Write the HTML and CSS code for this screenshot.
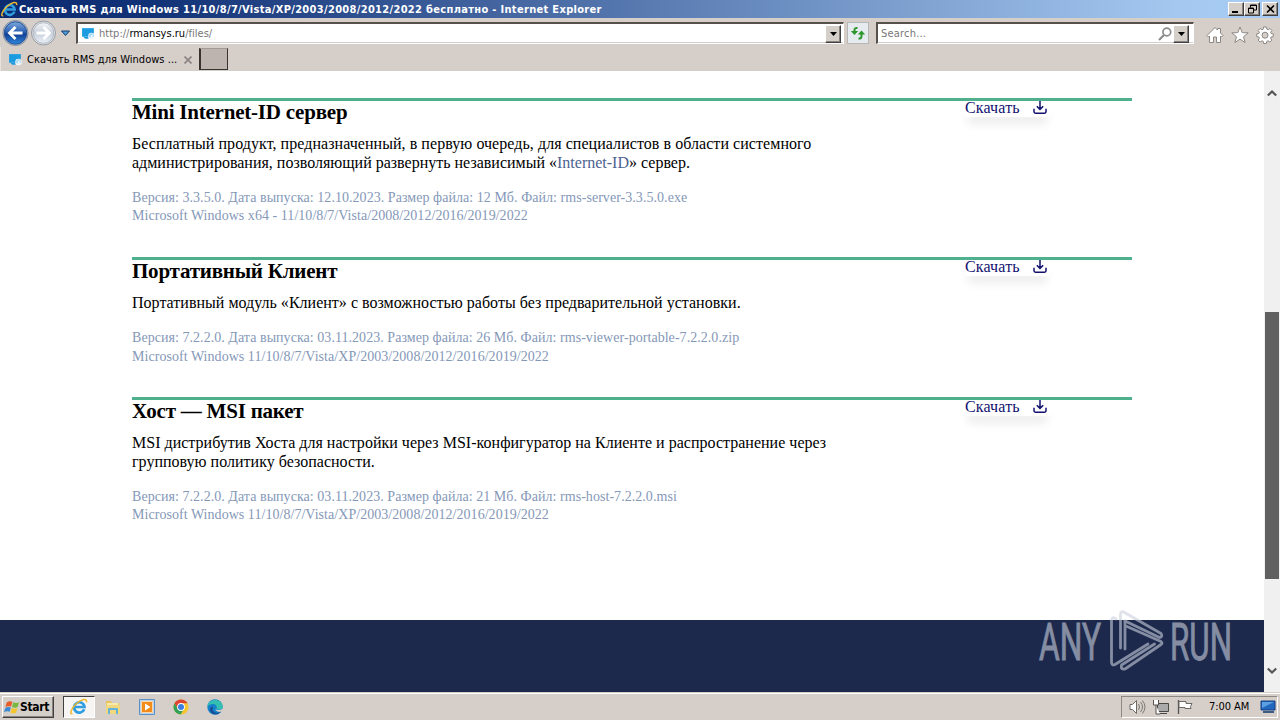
FILE: index.html
```html
<!DOCTYPE html>
<html lang="ru">
<head>
<meta charset="utf-8">
<title>Скачать RMS для Windows</title>
<link rel="stylesheet" href="styles.css">
</head>
<body>
<svg width="0" height="0" class="defs">
  <defs>
    <linearGradient id="blue" x1="0" y1="0" x2="0" y2="1"><stop offset="0" stop-color="#7ea9dc"/><stop offset=".45" stop-color="#2b62b4"/><stop offset=".55" stop-color="#123f93"/><stop offset="1" stop-color="#2f8ade"/></linearGradient>
    <linearGradient id="silver" x1="0" y1="0" x2="0" y2="1"><stop offset="0" stop-color="#f4f6f9"/><stop offset=".5" stop-color="#c7cfda"/><stop offset="1" stop-color="#eaf0f7"/></linearGradient>
    <symbol id="ie" viewBox="0 0 18 18">
      <path d="M14.2 11.3A5.2 5.2 0 1 1 14.5 9H5" fill="none" stroke="#2f9de0" stroke-width="2.7"/>
      <path d="M2.4 15.5C-.6 17 .6 11 6 6S17.5-.2 16.5 4.3" fill="none" stroke="#efb72c" stroke-width="1.5"/>
    </symbol>
    <symbol id="site" viewBox="0 0 14 14">
      <path d="M1 2h11v8H1z" fill="#1b9be0"/><path d="M2 10h5v2H4z" fill="#1b9be0"/>
      <circle cx="9.8" cy="9.3" r="3" fill="#fff"/><circle cx="9.8" cy="9" r="2.2" fill="#8fcdf0"/><path d="M9 8h2v4H9z" fill="#e8f6fd"/>
    </symbol>
    <symbol id="download" viewBox="0 0 14 14">
      <path d="M7 0v8M3.8 5.2 7 8.4l3.2-3.2M1 7.8v3q0 1.4 1.4 1.4h9.2q1.4 0 1.4-1.4v-3" fill="none" stroke="#12126e" stroke-width="1.5"/>
    </symbol>
    <symbol id="down" viewBox="0 0 7 4"><path d="M0 0h7L3.5 4z"/></symbol>
  </defs>
</svg>

<header class="titlebar">
  <svg class="title-ie"><use href="#ie"/></svg>
  <span class="title-text">Скачать RMS для Windows 11/10/8/7/Vista/XP/2003/2008/2012/2022 бесплатно - Internet Explorer</span>
  <div class="window-buttons">
    <span class="bevel winbtn"><svg viewBox="0 0 13 10"><path d="M2 7h6v2H2z"/></svg></span>
    <span class="bevel winbtn"><svg viewBox="0 0 13 10"><path d="M4.5 3.5V1h6v5H8M4.5 1.5h6" fill="none" stroke="#000"/><path d="M2.5 4v5h5V4zM2 4.5h6" fill="none" stroke="#000"/></svg></span>
    <span class="bevel winbtn close"><svg viewBox="0 0 13 10"><path d="m3 1.5 7 7m0-7-7 7" stroke="#000" stroke-width="1.6"/></svg></span>
  </div>
</header>

<nav class="navbar">
  <svg class="history" viewBox="0 0 74 28">
    <circle cx="15.5" cy="14" r="12.6" fill="#b8bfc9" stroke="#737b86" stroke-width=".7"/><circle cx="15.5" cy="14" r="11.2" fill="url(#blue)" stroke="#23519c"/>
    <path d="M22.5 14H10m5.5-6-6 6 6 6" fill="none" stroke="#fff" stroke-width="2.8"/>
    <circle cx="43.5" cy="14" r="12" fill="#dde1e6" stroke="#858b94" stroke-width=".8"/><circle cx="43.5" cy="14" r="10.3" fill="url(#silver)" stroke="#b2bac5"/>
    <path d="M36.5 14H49m-5.5-6 6 6-6 6" fill="none" stroke="#fff" stroke-width="2.8"/>
    <path d="M61.5 12h8l-4 4.5z" fill="#4e9bd8" stroke="#173d6b"/>
  </svg>
  <div class="field address">
    <svg class="site-icon"><use href="#site"/></svg>
    <span class="url">http://<b>rmansys.ru</b>/files/</span>
    <span class="bevel drop"><svg><use href="#down"/></svg></span>
  </div>
  <span class="refresh"><svg viewBox="0 0 16 16"><path d="M7.500 3Q4.500 2.500 4.500 5v2M8.500 13.500q3 .5 3-2.500V9" fill="none" stroke="#2b962b" stroke-width="2"/><path d="M.8 6h7.400L4.500 10zM7.800 9.500h7.400L11.500 5.500z" fill="#2b962b"/></svg></span>
  <div class="field search">
    <span class="placeholder">Search...</span>
    <svg class="glass" viewBox="0 0 14 14"><circle cx="8.8" cy="5" r="3.9" fill="none" stroke="#8b8b8b" stroke-width="1.7"/><path d="m6 8-5 5" stroke="#8b8b8b" stroke-width="2.2"/></svg>
    <span class="bevel drop"><svg><use href="#down"/></svg></span>
  </div>
  <div class="tools">
    <svg viewBox="0 0 18 18"><path d="M1 9.5 9 1.5l2.5 2.5V2.5h3V7L17 9.5 15.5 11l-1-1v6.5h-4V11h-3v5.500h-4V10l-1 1z" fill="#fff" stroke="#8d8884"/></svg>
    <svg viewBox="0 0 18 18"><path d="m9 1 2.2 5.600 6 .3-4.700 3.800 1.600 5.800L9 13.200l-5.100 3.300 1.600-5.800L.8 6.900l6-.3z" fill="#fff" stroke="#8d8884"/></svg>
    <svg viewBox="0 0 18 18"><path d="m7.500 1h3l.4 2.200 1.300.6L14 2.500 15.900 4.500l-1.300 1.800.5 1.200 2.200.4v2.700l-2.200.4-.5 1.300 1.300 1.800-2 2-1.800-1.300-1.300.5-.4 2.200H7.600l-.4-2.200-1.300-.5-1.800 1.300-2-2 1.300-1.800-.5-1.300-2.200-.4V7.900l2.200-.4.5-1.200L2.100 4.500l2-2 1.800 1.300 1.300-.6z" fill="#fff" stroke="#8d8884"/><circle cx="9" cy="9.200" r="3" fill="#d5cec9" stroke="#8d8884"/></svg>
  </div>
</nav>

<div class="tabs">
  <div class="tab">
    <svg class="site-icon"><use href="#site"/></svg>
    <span class="tab-text">Скачать RMS для Windows ...</span>
    <svg class="tab-close" viewBox="0 0 8 8"><path d="m.5.500 7 7m0-7-7 7" stroke="#8b8683" stroke-width="1.700"/></svg>
  </div>
  <span class="new-tab"></span>
</div>

<div class="viewport">
  <div class="page">
    <main class="products">
      <article class="product">
        <div class="info">
          <h2 class="name">Mini Internet-ID сервер</h2>
          <p class="about"><span class="wide">Бесплатный продукт, предназначенный, в первую очередь, для специалистов в области системного</span><br><span class="normal">администрирования, позволяющий развернуть независимый «<a class="link">Internet-ID</a>» сервер.</span></p>
          <p class="meta">Версия: 3.3.5.0. Дата выпуска: 12.10.2023. Размер файла: 12 Мб. Файл: rms-server-3.3.5.0.exe<br>Microsoft Windows x64 - 11/10/8/7/Vista/2008/2012/2016/2019/2022</p>
        </div>
        <a class="get">Скачать<svg><use href="#download"/></svg></a>
      </article>
      <article class="product">
        <div class="info">
          <h2 class="name">Портативный Клиент</h2>
          <p class="about">Портативный модуль «Клиент» с возможностью работы без предварительной установки.</p>
          <p class="meta">Версия: 7.2.2.0. Дата выпуска: 03.11.2023. Размер файла: 26 Мб. Файл: rms-viewer-portable-7.2.2.0.zip<br>Microsoft Windows 11/10/8/7/Vista/XP/2003/2008/2012/2016/2019/2022</p>
        </div>
        <a class="get">Скачать<svg><use href="#download"/></svg></a>
      </article>
      <article class="product">
        <div class="info">
          <h2 class="name">Хост — MSI пакет</h2>
          <p class="about">MSI дистрибутив Хоста для настройки через MSI-конфигуратор на Клиенте и распространение через<br>групповую политику безопасности.</p>
          <p class="meta">Версия: 7.2.2.0. Дата выпуска: 03.11.2023. Размер файла: 21 Мб. Файл: rms-host-7.2.2.0.msi<br>Microsoft Windows 11/10/8/7/Vista/XP/2003/2008/2012/2016/2019/2022</p>
        </div>
        <a class="get">Скачать<svg><use href="#download"/></svg></a>
      </article>
    </main>
    <footer class="footer"></footer>
  </div>
  <div class="scrollbar">
    <svg class="arrow" viewBox="0 0 10 8"><path d="m.8 6.500 4.200-4 4.200 4" fill="none" stroke="#555" stroke-width="2.200"/></svg>
    <span class="thumb"></span>
    <svg class="arrow" viewBox="0 0 10 8"><path d="m.8 1.500 4.200 4 4.200-4" fill="none" stroke="#555" stroke-width="2.200"/></svg>
  </div>
</div>

<svg class="watermark" viewBox="0 0 200 68">
  <g class="mark-text"><text x="0" y="51.500" textLength="62" lengthAdjust="spacingAndGlyphs">ANY</text><text x="131" y="51.500" textLength="62" lengthAdjust="spacingAndGlyphs">RUN</text></g>
  <g class="mark-lines">
    <path d="M77 11q-4-3-4.500 1v42q0 4 3.500 2.500l33-20.500"/>
    <path d="M81.500 40V7q0-5 4-2.500L122 25.500q2 3.500-1.500 4L86 13"/>
    <path d="M86 13v28M88 18.500 122 33.500q2 1.500 0 3L86 61q-4.500 1-3.500-4l33-21"/>
  </g>
</svg>

<footer class="taskbar">
  <span class="bevel start"><svg viewBox="0 0 17 16"><path d="M3 3q3-2 6-.5L7.500 7.500q-3-1-6 .5z" fill="#e85c29"/><path d="M10 3q3 1.500 6 0l-1.500 5q-3 1.500-6 0z" fill="#77b83e"/><path d="M1.300 9q3-1.500 6-.5L6 13q-3-1-6 .5z" fill="#3a8bd4"/><path d="M8.300 9q3 1.500 6 0l-1.500 5q-3 1.500-6 0z" fill="#f5c52e"/></svg><b>Start</b></span>
  <span class="task active"><svg viewBox="0 0 18 18"><use href="#ie"/></svg></span>
  <div class="launch">
    <svg viewBox="0 0 18 18"><path d="M2 3h5l1 2h7v10H2z" fill="#e9c45c"/><path d="M3 5h11v4H3z" fill="#f8eba8"/><path d="M2 7h14v9H2z" fill="#f1d77d"/><path d="M4 16v-5q0-1 1-1h8q1 0 1 1v5h-2v-4H6v4z" fill="#63b3dc"/></svg>
    <svg viewBox="0 0 18 18"><path d="M1.500 1.500h15v15h-15z" fill="#b9d3ec" stroke="#5990c8"/><path d="M3 3h12v12H3z" fill="#f28a1c"/><path d="M3.500 3.500h11v11h-11z" fill="none" stroke="#f9d9ab"/><path d="m7 5.500 5.500 3.500L7 12.500z" fill="#fff"/></svg>
    <svg viewBox="0 0 18 18"><circle cx="9" cy="9" r="7.500" fill="#f7c52d"/><path d="M2.500 5.250A7.500 7.500 0 0 1 15.500 5.250H9L5.800 10.900z" fill="#dd4434"/><path d="M2.500 5.250 5.800 10.900 12 10.900 8.500 16.500A7.500 7.500 0 0 1 2.500 5.250" fill="#33a057"/><circle cx="9" cy="9" r="3.900" fill="#fff"/><circle cx="9" cy="9" r="3" fill="#3b7de0"/></svg>
    <svg viewBox="0 0 18 18"><circle cx="9" cy="9" r="7.700" fill="#1682ca"/><path d="M1.500 8C3 0 16 0 16.700 8.500c0 3.500-5 4-6 2 1-4-4-6.500-9-2.500z" fill="#35bfb0"/><path d="M7 9c-2 5 4 7 8 5-5 5-12 1-11-3 .4-2 2-3 3-2z" fill="#174f97"/><path d="M10 11c1 2 5 1 6.500-.5l.5 2q-4 3-7.500-.5z" fill="#d5cec9"/></svg>
  </div>
  <div class="tray">
    <svg viewBox="0 0 18 16"><path d="M2 5.500h2.500l4-4v13l-4-4H2z" fill="#fff" stroke="#6d6964"/><path d="M10.500 5q2 3 0 6M12.500 3q4 5 0 10M14.500 1.500q5 6.500 0 13" fill="none" stroke="#7d7975"/></svg>
    <svg viewBox="0 0 18 16"><path d="M5.500 4.500h11v8h-11zM8 14.500h7" fill="#aaa" stroke="#4b4946"/><path d="M1.500 1v5h5V1M4 6v9h4" fill="#fff" stroke="#55524f"/></svg>
    <svg viewBox="0 0 18 16"><path d="M2.500 1v14" stroke="#55524f" stroke-width="1.300"/><path d="M3 2.500h7v2h6l-1.500 3 .5 2H9v-1H3z" fill="#fff" stroke="#6b6864"/></svg>
    <span class="clock">7:00 AM</span>
    <svg viewBox="0 0 18 16"><path d="M2 2h14v9H2z" fill="#2167bd" stroke="#173f80"/><path d="M3 3h12L3 9z" fill="#5c9fe2"/><path d="M4 13h11" stroke="#3d5b83" stroke-width="2"/></svg>
  </div>
</footer>
</body>
</html>
```
FILE: styles.css
```css
* { box-sizing: border-box; }
body {
  margin: 0; width: 1280px; height: 720px; overflow: hidden;
  display: flex; flex-direction: column; position: relative;
  background: #d5cec9; color: #000;
  font-family: "DejaVu Sans Condensed", "DejaVu Sans", sans-serif; font-size: 11px;
}
svg { display: block; flex: none; }
.defs { position: absolute; }
.bevel {
  background: #d5cfc9; border: 1px solid; border-color: #fff #404040 #404040 #fff;
  box-shadow: inset -1px -1px #88837e; display: flex; align-items: center; justify-content: center; flex: none;
}

.titlebar {
  height: 18px; flex: none; display: flex; align-items: center; padding: 0 2px 0 1px;
  background: linear-gradient(90deg, #0c2a70, #123277 12%, #a4c8f0 92%, #a8cdf4);
}
.title-ie { width: 17px; height: 17px; }
.title-text { flex: 1; margin-left: 1px; color: #fff; font-weight: bold; white-space: nowrap; letter-spacing: .32px; line-height: 17px; }
.window-buttons { display: flex; }
.winbtn { width: 16px; height: 14px; }
.winbtn svg { width: 13px; height: 10px; }
.close { margin-left: 2px; }

.navbar { height: 29px; flex: none; display: flex; align-items: flex-start; padding-top: 1px; }
.history { width: 74px; height: 28px; }
.field {
  height: 22px; margin-top: 3px; display: flex; align-items: center; background: #fff;
  border: 1px solid; border-color: #57504b #fff #fff #57504b; border-top-width: 2px; border-left-width: 2px;
  box-shadow: inset 0 -1px #d5cec9;
}
.address { width: 768px; margin-left: 2px; padding-left: 3px; }
.address .drop { margin-right: 2px; }
.site-icon { width: 15px; height: 15px; }
.url { flex: 1; margin-left: 3px; color: #777; letter-spacing: .02px; }
.url b { font-weight: normal; color: #000; }
.drop { width: 16px; height: 18px; margin-right: 1px; }
.drop svg { width: 7px; height: 4px; }
.refresh { width: 22px; height: 22px; margin: 3px 7px 0 3px; border: 1px solid #b9b7b6; background: #e6ebef; padding: 2px; }
.refresh svg { width: 16px; height: 16px; }
.search { width: 318px; padding-left: 3px; }
.search .drop { margin-right: 4px; }
.placeholder { flex: 1; color: #777; letter-spacing: .2px; }
.glass { width: 14px; height: 14px; margin-right: 1px; }
.tools { display: flex; gap: 7px; margin: 7px 0 0 12px; }
.tools svg { width: 18px; height: 18px; }

.tabs { height: 24px; flex: none; display: flex; align-items: flex-start; border-bottom: 1px solid #d3d0ca; }
.tab { width: 199px; height: 24px; display: flex; align-items: center; padding: 1px 0 0 7px; border-left: 1px solid #e7e2dd; }
.tab-text { width: 153px; margin-left: 4px; white-space: nowrap; letter-spacing: .03px; }
.tab-close { width: 8px; height: 8px; margin-left: 4px; }
.new-tab { width: 29px; height: 22px; margin-top: 1px; background: #bdb4af; border: 1px solid #38332f; border-top-color: #a19a95; border-width: 1px 1px 1px 2px; }

.viewport { height: 621px; flex: none; display: flex; background: #fff; }
.page { width: 1264px; display: flex; flex-direction: column; justify-content: space-between; }
.products { width: 1000px; margin: 27px 0 0 132px; font-family: "Liberation Serif", serif; }
.product { display: flex; border-top: 3px solid #4eb08c; height: 159px; }
.product + .product { height: 140px; }
.info { width: 833px; flex: none; white-space: nowrap; }
.name { margin: 0; font-size: 21px; line-height: 22px; height: 24px; letter-spacing: -.22px; }
.about { margin: 10px 0 0; font-size: 16px; line-height: 18.5px; letter-spacing: .015px; }
.wide { letter-spacing: .055px; }
.normal { letter-spacing: 0; }
.meta { margin: 16.8px 0 0; font-size: 14px; line-height: 18.5px; color: #8598b8; letter-spacing: .045px; }
.link { color: #4c6390; }
.get {
  width: 85px; height: 16px; display: flex; justify-content: space-between; align-items: center;
  padding: 0 3px 3px 0; color: #12126e; font-size: 16px; letter-spacing: .15px; line-height: 13px; box-shadow: 0 10px 10px -3px #00000014;
}
.get svg { width: 14px; height: 14px; }
.footer { height: 72px; background: #1c294d; }
.scrollbar { width: 16px; background: #f0f0f0; display: flex; flex-direction: column; align-items: center; padding-top: 18px; }
.arrow { width: 10px; height: 8px; }
.thumb { width: 14px; height: 267px; margin: 215px 0 88px; background: #606060; flex: none; }

.watermark { position: absolute; left: 1039px; top: 608px; width: 200px; height: 68px; overflow: visible; opacity: .6; }
.mark-text { fill: #cbd0dd; stroke: #cbd0dd; stroke-width: .9px; font: 51px "Roboto", sans-serif; }
.mark-lines { fill: none; stroke: #cbd0dd; stroke-width: 2.8px; stroke-linecap: round; stroke-linejoin: round; }

.taskbar { height: 28px; flex: none; display: flex; align-items: center; padding: 1px 2px; border-top: 1px solid #d5cec9; box-shadow: inset 0 1px #fff; }
.start { width: 52px; height: 22px; justify-content: flex-start; padding-left: 1px; letter-spacing: -.3px; font-size: 12px; }
.start svg { width: 16px; height: 16px; }
.task { width: 32px; height: 22px; margin-left: 9px; border: 1px solid; border-color: #404040 #fff #fff #404040; background: #f7f5f3; display: flex; align-items: center; justify-content: center; }
.task svg { width: 18px; height: 18px; }
.launch { display: flex; gap: 16px; margin-left: 9px; flex: 1; }
.launch svg { width: 18px; height: 18px; }
.tray { width: 157px; height: 22px; display: flex; align-items: center; gap: 6px; padding-left: 6px; border: 1px solid; border-color: #8e8883 #fff #fff #8e8883; }
.tray svg { width: 18px; height: 16px; }
.clock { width: 42px; margin: 0 3px 0 9px; white-space: nowrap; letter-spacing: -.05px; }
```
